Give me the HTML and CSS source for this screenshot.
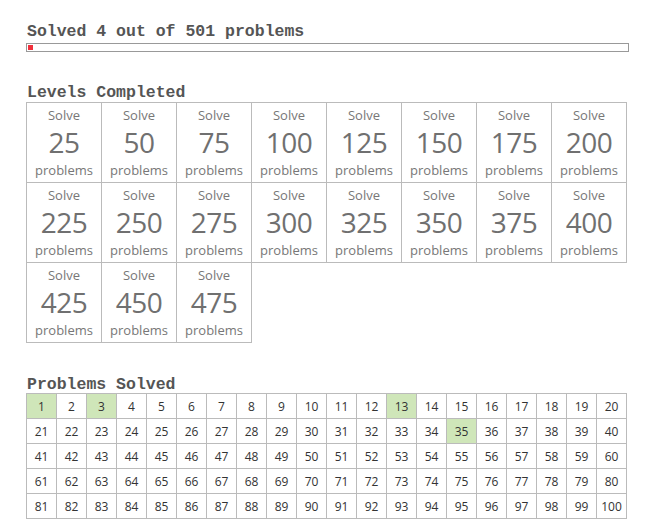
FILE: index.html
```html
<!DOCTYPE html>
<html>
<head>
<meta charset="utf-8">
<link rel="stylesheet" href="styles.css">
</head>
<body>
<div class="page">
  <h2 class="title">Solved 4 out of 501 problems</h2>
  <div class="bar"><div class="fill" style="width:0.9%"></div></div>

  <h2 class="title levels-title">Levels Completed</h2>
  <div class="levels" id="levels"></div>

  <h2 class="title problems-title">Problems Solved</h2>
  <div class="grid" id="grid"></div>
</div>
<script src="app.js"></script>
</body>
</html>
```
FILE: app.js
```js
(function(){
  var lv = document.getElementById('levels');
  for (var n = 25; n <= 475; n += 25) {
    var d = document.createElement('div');
    d.className = 'level';
    d.innerHTML = '<div class="lv-top">Solve</div><div class="lv-num">' + n + '</div><div class="lv-bot">problems</div>';
    lv.appendChild(d);
  }
  var solved = {1:1, 3:1, 13:1, 35:1};
  var g = document.getElementById('grid');
  for (var i = 1; i <= 100; i++) {
    var c = document.createElement('div');
    c.className = 'cell' + (solved[i] ? ' solved' : '');
    c.textContent = i;
    g.appendChild(c);
  }
})();
```
FILE: styles.css
```css
html, body { margin: 0; padding: 0; background: #fff; }
.page { padding: 23px 0 0 26px; width: 604px; }
.title {
  font-family: "Liberation Mono", "Courier New", monospace;
  font-weight: bold;
  font-size: 16.5px;
  line-height: 18px;
  color: #555;
  margin: 0 0 2px 1px;
}
.bar {
  width: 599px;
  height: 5px;
  border: 1px solid #999;
  padding: 1px;
}
.fill { height: 100%; background: #f0303c; }
.levels-title { margin-top: 32px; margin-bottom: 0; }
.levels {
  display: grid;
  grid-template-columns: repeat(8, 75px);
  grid-auto-rows: 80px;
  border-left: 1px solid #bbb;
  border-top: 1px solid #bbb;
  width: 600px;
}
.level {
  border-right: 1px solid #bbb;
  border-bottom: 1px solid #bbb;
  font-family: "Open Sans", "DejaVu Sans", sans-serif;
  color: #777;
  text-align: center;
  display: flex;
  flex-direction: column;
  align-items: center;
}
.lv-top { font-size: 13px; line-height: 16px; margin-top: 4px; }
.lv-num { font-size: 28px; line-height: 34px; margin-top: 2px; color: #707070; letter-spacing: -0.5px; }
.lv-bot { font-size: 13px; line-height: 16px; margin-top: 3px; }
.problems-title { margin-top: 33px; margin-bottom: -1px; }
.grid {
  display: grid;
  grid-template-columns: repeat(20, 30px);
  grid-auto-rows: 25px;
  border-left: 1px solid #bbb;
  border-top: 1px solid #bbb;
  width: 600px;
}
.cell {
  border-right: 1px solid #bbb;
  border-bottom: 1px solid #bbb;
  font-family: "Open Sans", "DejaVu Sans", sans-serif;
  font-size: 12px;
  color: #333;
  display: flex;
  align-items: center;
  justify-content: center;
}
.cell.solved { background: #cfe6b9; }
```
